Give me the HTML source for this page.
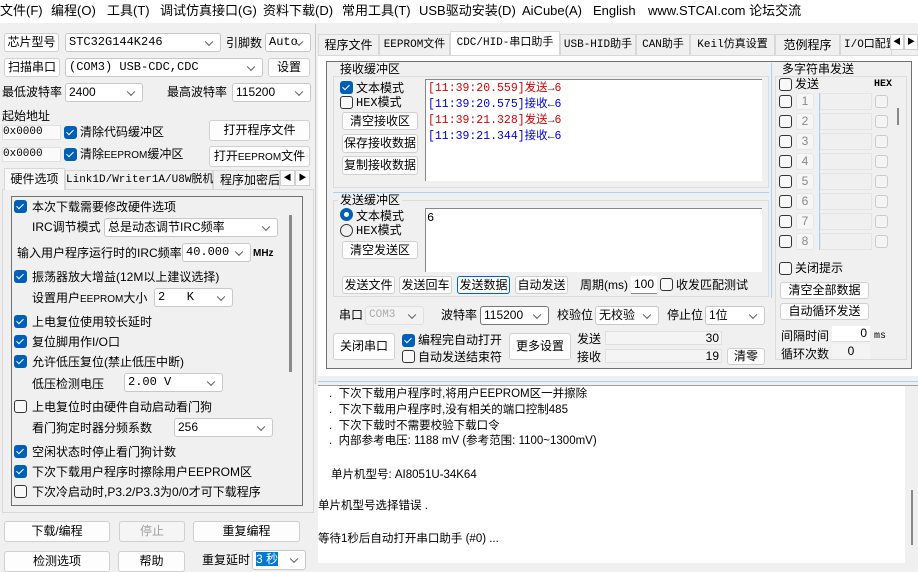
<!DOCTYPE html>
<html><head><meta charset="utf-8"><style>
*{box-sizing:border-box;margin:0;padding:0}
body{width:918px;height:568px;overflow:hidden;background:#f0f0f0;position:relative;font:12px "Liberation Sans","Noto Sans CJK SC",sans-serif;color:#000}
.a{position:absolute;white-space:nowrap}
.t{position:absolute;white-space:nowrap;line-height:14px}
.b{position:absolute;background:#fdfdfd;border:1px solid #d0d0d0;border-radius:3px;text-align:center;white-space:nowrap}
.s{position:absolute;background:#fff;border:1px solid #c8c8c8;border-radius:3px;white-space:nowrap;padding-left:3px}
.s:after{content:"";position:absolute;right:8px;top:50%;width:5px;height:5px;border-right:1px solid #555;border-bottom:1px solid #555;transform:translateY(-70%) rotate(45deg)}
.ck{position:absolute;width:13px;height:13px;background:#005fb8;border-radius:3px}
.ck:after{content:"";position:absolute;left:4px;top:2px;width:3px;height:6px;border-right:1.5px solid #fff;border-bottom:1.5px solid #fff;transform:rotate(45deg)}
.uc{position:absolute;width:13px;height:13px;border:1px solid #333;border-radius:3px;background:#f8f8f8}
.uc2{position:absolute;width:13px;height:13px;border:1px solid #ccc;border-radius:3px;background:#f4f4f4}
.gb{position:absolute;border:1px solid #dcdcdc}
.gt{position:absolute;background:#f0f0f0;padding:0 2px;line-height:14px}
.tab{position:absolute;border:1px solid #d8d8d8;border-bottom:none;background:#f0f0f0;text-align:center;line-height:20px;white-space:nowrap}
.m{font-family:"Liberation Mono","Noto Sans CJK SC",monospace}
.n{font-size:10px}
</style></head><body>
<div class="a" style="left:0;top:0;width:918px;height:23px;background:#fff"></div>
<div class="t" style="left:0;top:4px;font-size:13px">文件(F)</div>
<div class="t" style="left:51px;top:4px;font-size:13px">编程(O)</div>
<div class="t" style="left:107px;top:4px;font-size:13px">工具(T)</div>
<div class="t" style="left:160px;top:4px;font-size:13px">调试仿真接口(G)</div>
<div class="t" style="left:263px;top:4px;font-size:13px">资料下载(D)</div>
<div class="t" style="left:342px;top:4px;font-size:13px">常用工具(T)</div>
<div class="t" style="left:419px;top:4px;font-size:13px">USB驱动安装(D)</div>
<div class="t" style="left:522px;top:4px;font-size:13px">AiCube(A)</div>
<div class="t" style="left:593px;top:4px;font-size:13px">English</div>
<div class="t" style="left:648px;top:4px;font-size:13px">www.STCAI.com 论坛交流</div>

<div class="b" style="left:4px;top:33px;width:55px;height:19px;line-height:17px">芯片型号</div>
<div class="s m" style="left:65px;top:33px;width:156px;height:19px;line-height:17px">STC32G144K246</div>
<div class="t" style="left:226px;top:36px">引脚数</div>
<div class="s m" style="left:265px;top:33px;width:46px;height:19px;line-height:17px">Auto</div>
<div class="b" style="left:4px;top:58px;width:56px;height:19px;line-height:17px">扫描串口</div>
<div class="s m" style="left:65px;top:58px;width:198px;height:19px;line-height:17px">(COM3) USB-CDC,CDC</div>
<div class="b" style="left:268px;top:58px;width:42px;height:19px;line-height:17px">设置</div>
<div class="t" style="left:2px;top:85px">最低波特率</div>
<div class="s" style="left:65px;top:83px;width:78px;height:19px;line-height:17px">2400</div>
<div class="t" style="left:167px;top:85px">最高波特率</div>
<div class="s" style="left:232px;top:83px;width:79px;height:19px;line-height:17px">115200</div>
<div class="t" style="left:2px;top:109px">起始地址</div>
<div class="a m" style="left:2px;top:125px;width:59px;height:15px;background:#fafafa;border:1px solid #e0e0e0;line-height:13px;font-size:11px">0x0000</div>
<div class="ck" style="left:64px;top:126px"></div><div class="t" style="left:80px;top:125px">清除代码缓冲区</div>
<div class="b" style="left:209px;top:120px;width:101px;height:21px;line-height:19px">打开程序文件</div>
<div class="a m" style="left:2px;top:147px;width:59px;height:15px;background:#fafafa;border:1px solid #e0e0e0;line-height:13px;font-size:11px">0x0000</div>
<div class="ck" style="left:64px;top:148px"></div><div class="t" style="left:80px;top:147px">清除<span class="n">EEPROM</span>缓冲区</div>
<div class="b" style="left:209px;top:146px;width:101px;height:21px;line-height:19px">打开<span class="n">EEPROM</span>文件</div>

<div class="a" style="left:2px;top:189px;width:312px;height:324px;border:1px solid #d8d8d8;background:#f0f0f0"></div>
<div class="tab" style="left:4px;top:168px;width:61px;height:22px;background:#f9f9f9;line-height:21px">硬件选项</div>
<div class="tab m" style="left:65px;top:170px;width:148px;height:19px;font-size:11px;line-height:18px">Link1D/Writer1A/U8W脱机</div>
<div class="tab" style="left:213px;top:170px;width:67px;height:19px;line-height:18px;overflow:hidden;text-align:left;padding-left:6px">程序加密后</div>
<div class="b" style="left:280px;top:170px;width:15px;height:16px;font-size:8px;line-height:14px;border-radius:0">◀</div>
<div class="b" style="left:295px;top:170px;width:15px;height:16px;font-size:8px;line-height:14px;border-radius:0">▶</div>

<div class="a" style="left:11px;top:196px;width:292px;height:310px;border:1px solid #707070;background:#f0f0f0"></div>
<div class="a" style="left:289px;top:215px;width:3px;height:157px;background:#8a8a8a"></div>
<div class="ck" style="left:14px;top:200px"></div><div class="t" style="left:32px;top:200px">本次下载需要修改硬件选项</div>
<div class="t" style="left:32px;top:220px">IRC调节模式</div>
<div class="s" style="left:104px;top:218px;width:174px;height:19px;line-height:17px">总是动态调节IRC频率</div>
<div class="t" style="left:17px;top:246px">输入用户程序运行时的IRC频率</div>
<div class="s m" style="left:182px;top:243px;width:69px;height:19px;line-height:17px">40.000</div>
<div class="t" style="left:253px;top:247px;font-size:10px;font-weight:bold">MHz</div>
<div class="ck" style="left:14px;top:270px"></div><div class="t" style="left:32px;top:270px">振荡器放大增益(12M以上建议选择)</div>
<div class="t" style="left:32px;top:291px">设置用户<span class="n">EEPROM</span>大小</div>
<div class="s m" style="left:154px;top:288px;width:79px;height:19px;line-height:17px">2&nbsp;&nbsp;&nbsp;K</div>
<div class="ck" style="left:14px;top:315px"></div><div class="t" style="left:32px;top:315px">上电复位使用较长延时</div>
<div class="ck" style="left:14px;top:335px"></div><div class="t" style="left:32px;top:335px">复位脚用作I/O口</div>
<div class="ck" style="left:14px;top:355px"></div><div class="t" style="left:32px;top:355px">允许低压复位(禁止低压中断)</div>
<div class="t" style="left:32px;top:377px">低压检测电压</div>
<div class="s m" style="left:124px;top:373px;width:99px;height:19px;line-height:17px">2.00 V</div>
<div class="uc" style="left:14px;top:400px"></div><div class="t" style="left:32px;top:400px">上电复位时由硬件自动启动看门狗</div>
<div class="t" style="left:32px;top:421px">看门狗定时器分频系数</div>
<div class="s" style="left:174px;top:418px;width:99px;height:19px;line-height:17px">256</div>
<div class="ck" style="left:14px;top:445px"></div><div class="t" style="left:32px;top:445px">空闲状态时停止看门狗计数</div>
<div class="ck" style="left:14px;top:465px"></div><div class="t" style="left:32px;top:465px">下次下载用户程序时擦除用户EEPROM区</div>
<div class="uc" style="left:14px;top:485px"></div><div class="t" style="left:32px;top:485px">下次冷启动时,P3.2/P3.3为0/0才可下载程序</div>

<div class="b" style="left:4px;top:521px;width:106px;height:21px;line-height:19px">下载/编程</div>
<div class="b" style="left:119px;top:521px;width:66px;height:21px;line-height:19px;color:#a0a0a0;background:#f5f5f5">停止</div>
<div class="b" style="left:193px;top:521px;width:107px;height:21px;line-height:19px">重复编程</div>
<div class="b" style="left:4px;top:551px;width:106px;height:21px;line-height:19px">检测选项</div>
<div class="b" style="left:118px;top:551px;width:67px;height:21px;line-height:19px">帮助</div>
<div class="t" style="left:202px;top:553px">重复延时</div>
<div class="s" style="left:252px;top:550px;width:54px;height:20px;line-height:17px"><span style="background:#0078d7;color:#fff">3 秒</span></div>

<div class="a" style="left:315px;top:24px;width:1px;height:360px;background:#c8c8c8"></div>

<div class="tab" style="left:318px;top:34px;width:61px;height:21px">程序文件</div>
<div class="tab m" style="left:379px;top:34px;width:71px;height:21px;font-size:11px">EEPROM文件</div>
<div class="tab m" style="left:450px;top:31px;width:110px;height:25px;background:#fff;font-size:11px;line-height:22px">CDC/HID-串口助手</div>
<div class="tab m" style="left:560px;top:34px;width:76px;height:21px;font-size:11px">USB-HID助手</div>
<div class="tab m" style="left:636px;top:34px;width:54px;height:21px;font-size:11px">CAN助手</div>
<div class="tab m" style="left:690px;top:34px;width:85px;height:21px;font-size:11px">Keil仿真设置</div>
<div class="tab" style="left:775px;top:34px;width:65px;height:21px">范例程序</div>
<div class="tab m" style="left:840px;top:34px;width:52px;height:21px;font-size:11px;overflow:hidden;text-align:left;padding-left:3px">I/O口配置</div>
<div class="b" style="left:890px;top:34px;width:14px;height:16px;font-size:8px;line-height:14px;border-radius:0">◀</div>
<div class="b" style="left:904px;top:34px;width:14px;height:16px;font-size:8px;line-height:14px;border-radius:0">▶</div>

<div class="a" style="left:318px;top:55px;width:600px;height:321px;background:#fff;border-top:1px solid #d8d8d8"></div>
<div class="a" style="left:326px;top:61px;width:586px;height:308px;border:1px solid #707070;background:#f0f0f0"></div>

<div class="gb" style="left:333px;top:76px;width:436px;height:112px"></div>
<div class="gt" style="left:338px;top:62px">接收缓冲区</div>
<div class="ck" style="left:340px;top:81px"></div><div class="t" style="left:356px;top:81px">文本模式</div>
<div class="uc" style="left:340px;top:96px"></div><div class="t m" style="left:356px;top:96px">HEX模式</div>
<div class="b" style="left:342px;top:112px;width:76px;height:18px;line-height:16px">清空接收区</div>
<div class="b" style="left:342px;top:134px;width:76px;height:19px;line-height:17px">保存接收数据</div>
<div class="b" style="left:342px;top:156px;width:76px;height:19px;line-height:17px">复制接收数据</div>
<div class="a m" style="left:425px;top:79px;width:337px;height:102px;background:#fff;border-left:1px solid #888;border-top:1px solid #888;font-size:11.5px;line-height:16px;padding:1px 2px">
<div style="color:#e00000">[11:39:20.559]发送→6</div>
<div style="color:#0000e0">[11:39:20.575]接收←6</div>
<div style="color:#e00000">[11:39:21.328]发送→6</div>
<div style="color:#0000e0">[11:39:21.344]接收←6</div>
</div>
<div class="a" style="left:333px;top:192px;width:436px;height:1px;background:#a8d0f0"></div>
<div class="a" style="left:771px;top:63px;width:1px;height:235px;background:#a8d0f0"></div>

<div class="gb" style="left:333px;top:200px;width:436px;height:97px"></div>
<div class="gt" style="left:338px;top:193px">发送缓冲区</div>
<div class="a" style="left:340px;top:208px;width:13px;height:13px;border-radius:50%;border:4px solid #005fb8;background:#fff"></div><div class="t" style="left:356px;top:209px">文本模式</div>
<div class="a" style="left:340px;top:224px;width:13px;height:13px;border-radius:50%;border:1px solid #333"></div><div class="t m" style="left:356px;top:224px">HEX模式</div>
<div class="b" style="left:342px;top:241px;width:76px;height:18px;line-height:16px">清空发送区</div>
<div class="a m" style="left:425px;top:208px;width:337px;height:64px;background:#fff;border-left:1px solid #888;border-top:1px solid #888;padding:2px 1px;line-height:14px">6</div>
<div class="b" style="left:342px;top:276px;width:53px;height:18px;line-height:16px">发送文件</div>
<div class="b" style="left:399px;top:276px;width:53px;height:18px;line-height:16px">发送回车</div>
<div class="b" style="left:457px;top:276px;width:53px;height:18px;line-height:16px;border-color:#0067c0">发送数据</div>
<div class="b" style="left:515px;top:276px;width:53px;height:18px;line-height:16px">自动发送</div>
<div class="t" style="left:580px;top:278px">周期(ms)</div>
<div class="a" style="left:631px;top:276px;width:26px;height:18px;background:#fff;border-bottom:1px solid #888;text-align:center;line-height:16px">100</div>
<div class="uc" style="left:660px;top:278px"></div><div class="t" style="left:676px;top:278px">收发匹配测试</div>

<div class="t" style="left:339px;top:308px">串口</div>
<div class="s m" style="left:365px;top:306px;width:59px;height:19px;line-height:17px;color:#aaa;background:#f3f3f3;border-color:#e0e0e0;font-size:11px">COM3</div>
<div class="t" style="left:441px;top:308px">波特率</div>
<div class="s" style="left:480px;top:306px;width:69px;height:19px;line-height:17px;border-color:#777">115200</div>
<div class="t" style="left:557px;top:308px">校验位</div>
<div class="s" style="left:595px;top:306px;width:64px;height:19px;line-height:17px">无校验</div>
<div class="t" style="left:667px;top:308px">停止位</div>
<div class="s" style="left:705px;top:306px;width:60px;height:19px;line-height:17px">1位</div>
<div class="b" style="left:333px;top:333px;width:62px;height:27px;line-height:25px">关闭串口</div>
<div class="ck" style="left:402px;top:334px"></div><div class="t" style="left:418px;top:333px">编程完自动打开</div>
<div class="uc" style="left:402px;top:350px"></div><div class="t" style="left:418px;top:350px">自动发送结束符</div>
<div class="b" style="left:509px;top:333px;width:62px;height:27px;line-height:25px">更多设置</div>
<div class="t" style="left:577px;top:332px">发送</div>
<div class="a" style="left:605px;top:331px;width:117px;height:14px;background:#f4f4f4;border:1px solid #e0e0e0;text-align:right;line-height:12px;padding-right:2px">30</div>
<div class="t" style="left:577px;top:350px">接收</div>
<div class="a" style="left:605px;top:349px;width:117px;height:14px;background:#f4f4f4;border:1px solid #e0e0e0;text-align:right;line-height:12px;padding-right:2px">19</div>
<div class="b" style="left:727px;top:348px;width:38px;height:17px;line-height:15px">清零</div>

<div class="gb" style="left:775px;top:76px;width:132px;height:284px"></div>
<div class="gt" style="left:780px;top:62px">多字符串发送</div>
<div class="uc" style="left:779px;top:78px"></div><div class="t" style="left:795px;top:77px">发送</div>
<div class="t m" style="left:874px;top:78px;font-size:10px;font-weight:bold">HEX</div>
<div class="a" style="left:819px;top:93px;width:1px;height:157px;background:#a8d0f0"></div>
<div class="a" style="left:897px;top:108px;width:2px;height:17px;background:#888"></div>
<div class="uc" style="left:779px;top:262px"></div><div class="t" style="left:795px;top:261px">关闭提示</div>
<div class="b" style="left:780px;top:282px;width:89px;height:17px;line-height:15px">清空全部数据</div>
<div class="b" style="left:780px;top:303px;width:89px;height:17px;line-height:15px">自动循环发送</div>
<div class="t" style="left:781px;top:329px">间隔时间</div>
<div class="a" style="left:832px;top:326px;width:38px;height:16px;background:#fff;text-align:right;line-height:15px;padding-right:3px;border-bottom:1px solid #ddd">0</div>
<div class="t m" style="left:874px;top:330px;font-size:10px">ms</div>
<div class="t" style="left:781px;top:347px">循环次数</div>
<div class="a" style="left:832px;top:344px;width:38px;height:16px;background:#f4f4f4;text-align:center;line-height:15px;border-bottom:1px solid #ddd">0</div>

<div class="uc" style="left:779px;top:95px"></div><div class="a" style="left:796px;top:93px;width:18px;height:17px;background:#f6f6f6;border:1px solid #e6e6e6;border-radius:3px;color:#888;text-align:center;line-height:15px">1</div><div class="a" style="left:820px;top:93px;width:52px;height:17px;border:1px solid #e4e4e4"></div><div class="uc2" style="left:875px;top:95px"></div>
<div class="uc" style="left:779px;top:115px"></div><div class="a" style="left:796px;top:113px;width:18px;height:17px;background:#f6f6f6;border:1px solid #e6e6e6;border-radius:3px;color:#888;text-align:center;line-height:15px">2</div><div class="a" style="left:820px;top:113px;width:52px;height:17px;border:1px solid #e4e4e4"></div><div class="uc2" style="left:875px;top:115px"></div>
<div class="uc" style="left:779px;top:135px"></div><div class="a" style="left:796px;top:133px;width:18px;height:17px;background:#f6f6f6;border:1px solid #e6e6e6;border-radius:3px;color:#888;text-align:center;line-height:15px">3</div><div class="a" style="left:820px;top:133px;width:52px;height:17px;border:1px solid #e4e4e4"></div><div class="uc2" style="left:875px;top:135px"></div>
<div class="uc" style="left:779px;top:155px"></div><div class="a" style="left:796px;top:153px;width:18px;height:17px;background:#f6f6f6;border:1px solid #e6e6e6;border-radius:3px;color:#888;text-align:center;line-height:15px">4</div><div class="a" style="left:820px;top:153px;width:52px;height:17px;border:1px solid #e4e4e4"></div><div class="uc2" style="left:875px;top:155px"></div>
<div class="uc" style="left:779px;top:175px"></div><div class="a" style="left:796px;top:173px;width:18px;height:17px;background:#f6f6f6;border:1px solid #e6e6e6;border-radius:3px;color:#888;text-align:center;line-height:15px">5</div><div class="a" style="left:820px;top:173px;width:52px;height:17px;border:1px solid #e4e4e4"></div><div class="uc2" style="left:875px;top:175px"></div>
<div class="uc" style="left:779px;top:195px"></div><div class="a" style="left:796px;top:193px;width:18px;height:17px;background:#f6f6f6;border:1px solid #e6e6e6;border-radius:3px;color:#888;text-align:center;line-height:15px">6</div><div class="a" style="left:820px;top:193px;width:52px;height:17px;border:1px solid #e4e4e4"></div><div class="uc2" style="left:875px;top:195px"></div>
<div class="uc" style="left:779px;top:215px"></div><div class="a" style="left:796px;top:213px;width:18px;height:17px;background:#f6f6f6;border:1px solid #e6e6e6;border-radius:3px;color:#888;text-align:center;line-height:15px">7</div><div class="a" style="left:820px;top:213px;width:52px;height:17px;border:1px solid #e4e4e4"></div><div class="uc2" style="left:875px;top:215px"></div>
<div class="uc" style="left:779px;top:235px"></div><div class="a" style="left:796px;top:233px;width:18px;height:17px;background:#f6f6f6;border:1px solid #e6e6e6;border-radius:3px;color:#888;text-align:center;line-height:15px">8</div><div class="a" style="left:820px;top:233px;width:52px;height:17px;border:1px solid #e4e4e4"></div><div class="uc2" style="left:875px;top:235px"></div>

<div class="a" style="left:318px;top:381px;width:600px;height:1px;background:#a8d0f0"></div>
<div class="a" style="left:318px;top:385px;width:600px;height:1px;background:#a0a0a0"></div>
<div class="a" style="left:318px;top:386px;width:587px;height:177px;background:#fff;font-size:11.5px;line-height:16px">
<div class="a" style="left:11px;top:0">.&nbsp;&nbsp;下次下载用户程序时,将用户EEPROM区一并擦除</div>
<div class="a" style="left:11px;top:16px">.&nbsp;&nbsp;下次下载用户程序时,没有相关的端口控制485</div>
<div class="a" style="left:11px;top:32px">.&nbsp;&nbsp;下次下载时不需要校验下载口令</div>
<div class="a" style="left:11px;top:47px">.&nbsp;&nbsp;内部参考电压: 1188 mV (参考范围: 1100~1300mV)</div>
<div class="a" style="left:13px;top:81px">单片机型号: AI8051U-34K64</div>
<div class="a" style="left:0;top:112px">单片机型号选择错误 .</div>
<div class="a" style="left:0;top:145px">等待1秒后自动打开串口助手 (#0) ...</div>
</div>
<div class="a" style="left:911px;top:490px;width:2px;height:55px;background:#888"></div>
</body></html>
